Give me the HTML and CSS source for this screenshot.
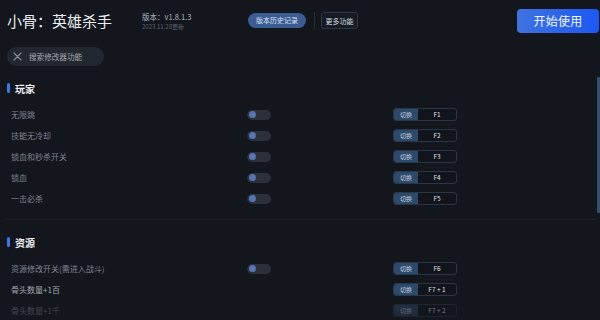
FILE: index.html
```html
<!DOCTYPE html>
<html lang="zh-CN">
<head>
<meta charset="utf-8">
<title>小骨：英雄杀手</title>
<link rel="stylesheet" href="styles.css">
</head>
<body>
<div class="app">
  <header class="top">
    <h1 class="title">小骨：英雄杀手</h1>
    <div class="ver">
      <div class="ver-num">版本：v1.8.1.3</div>
      <div class="ver-date">2023.11.28更新</div>
    </div>
    <button class="btn-history">版本历史记录</button>
    <span class="vdiv"></span>
    <button class="btn-more">更多功能</button>
    <button class="btn-start">开始使用</button>
  </header>

  <div class="search">
    <svg class="search-x" width="9" height="9" viewBox="0 0 9 9"><path d="M1 1 L8 8 M8 1 L1 8" stroke="#8a8f98" stroke-width="1.1" fill="none" stroke-linecap="round"/></svg>
    <span>搜索修改器功能</span>
  </div>

  <main class="content">
    <section class="group">
      <h2 class="group-title">玩家</h2>
      <ul class="rows">
        <li class="row"><span class="label">无限跳</span><span class="toggle"><i></i></span><span class="key"><b>切换</b><em>F1</em></span></li>
        <li class="row"><span class="label">技能无冷却</span><span class="toggle"><i></i></span><span class="key"><b>切换</b><em>F2</em></span></li>
        <li class="row"><span class="label">锁血和秒杀开关</span><span class="toggle"><i></i></span><span class="key"><b>切换</b><em>F3</em></span></li>
        <li class="row"><span class="label">锁血</span><span class="toggle"><i></i></span><span class="key"><b>切换</b><em>F4</em></span></li>
        <li class="row"><span class="label">一击必杀</span><span class="toggle"><i></i></span><span class="key"><b>切换</b><em>F5</em></span></li>
      </ul>
    </section>
    <section class="group">
      <h2 class="group-title">资源</h2>
      <ul class="rows">
        <li class="row"><span class="label">资源修改开关(需进入战斗)</span><span class="toggle"><i></i></span><span class="key"><b>切换</b><em>F6</em></span></li>
        <li class="row hover"><span class="label">骨头数量+1百</span><span></span><span class="key"><b>切换</b><em>F7 + 1</em></span></li>
        <li class="row"><span class="label">骨头数量+1千</span><span></span><span class="key"><b>切换</b><em>F7 + 2</em></span></li>
      </ul>
    </section>
  </main>

  <div class="scrollbar"></div>
  <div class="fade"></div>
</div>
</body>
</html>
```

FILE: styles.css
```css
* { box-sizing: border-box; }
html, body { margin: 0; padding: 0; }
body {
  background: #13161d;
  font-family: "Noto Sans CJK SC", "Noto Sans", sans-serif;
  color: #e6e8eb;
  width: 600px;
  height: 320px;
  overflow: hidden;
}
.app { position: relative; width: 600px; height: 320px; overflow: hidden; }

.top {
  display: flex;
  align-items: center;
  height: 41px;
  padding-left: 7px;
}
.title {
  margin: 0;
  width: 135px;
  font-size: 15px;
  font-weight: 400;
  color: #eceef1;
  line-height: 1;
  white-space: nowrap;
}
.ver { width: 106px; line-height: 1; padding-top: 2px; }
.ver-num { font-size: 7.5px; color: #b4b9c2; }
.ver-date { font-size: 6px; color: #5d636d; margin-top: 3px; }

button { font-family: inherit; border: none; cursor: pointer; padding: 0; }
.btn-history {
  width: 58px;
  height: 15px;
  border-radius: 8px;
  background: #3c5d93;
  color: #d6e1f2;
  font-size: 7px;
  line-height: 15px;
}
.vdiv { width: 1px; height: 18px; background: #2a2f38; margin: 0 6px 0 8px; }
.btn-more {
  width: 37px;
  height: 17px;
  border-radius: 3px;
  background: #161a22;
  border: 1px solid #2e3543;
  color: #d8dbe0;
  font-size: 7px;
}
.btn-start {
  margin-left: auto;
  margin-right: 1px;
  width: 82px;
  height: 24px;
  border-radius: 4px;
  background: linear-gradient(90deg, #3e73df 0%, #1d58f2 100%);
  color: #f3f6ff;
  font-size: 12px;
  letter-spacing: 0.3px;
}

.search {
  display: flex;
  align-items: center;
  margin: 6px 0 0 7px;
  width: 97px;
  height: 19px;
  border-radius: 10px;
  background: #23272f;
  padding-left: 6px;
  font-size: 7.6px;
  color: #a6abb3;
}
.search-x { margin-right: 7px; }

.content { padding: 0 4px 0 6px; }
.group { padding: 15px 0 10px; border-bottom: 1px solid #1e2229; }
.group-title {
  display: flex;
  align-items: center;
  margin: 0;
  height: 14px;
  font-size: 10px;
  font-weight: 700;
  color: #eef0f3;
}
.group-title::before {
  content: "";
  width: 3px;
  height: 10px;
  border-radius: 2px;
  background: #3a78ea;
  margin: 0 5px 0 1px;
}
.rows { list-style: none; margin: 9px 0 0; padding: 0; }
.row {
  display: grid;
  grid-template-columns: 236px 146px 64px;
  align-items: center;
  height: 21px;
  padding-left: 5px;
}
.label { font-size: 8px; color: #7f848d; white-space: nowrap; }
.row.hover .label { color: #a3a8b0; }

.toggle {
  position: relative;
  width: 24px;
  height: 10px;
  border-radius: 5px;
  background: #2c3038;
}
.toggle i {
  position: absolute;
  left: 1.5px;
  top: 1.25px;
  width: 7.5px;
  height: 7.5px;
  border-radius: 50%;
  background: #5675b3;
}

.key {
  display: flex;
  height: 13px;
  border: 1px solid #2a3545;
  border-radius: 3px;
  overflow: hidden;
  background: #11141a;
  line-height: 11px;
}
.key b {
  width: 24px;
  background: #2d4a6b;
  color: #c9d4e2;
  font-weight: 400;
  font-size: 6px;
  text-align: center;
}
.key em {
  flex: 1;
  font-style: normal;
  font-size: 6.5px;
  color: #e3e5e8;
  text-align: center;
}

.scrollbar {
  position: absolute;
  left: 597px;
  top: 77px;
  width: 2.5px;
  height: 136px;
  border-radius: 1px;
  background: #34506f;
}
.fade {
  position: absolute;
  left: 0;
  right: 0;
  bottom: 0;
  height: 22px;
  background: linear-gradient(180deg, rgba(19,22,29,0.45) 0%, rgba(19,22,29,0.65) 100%);
  pointer-events: none;
}
```
